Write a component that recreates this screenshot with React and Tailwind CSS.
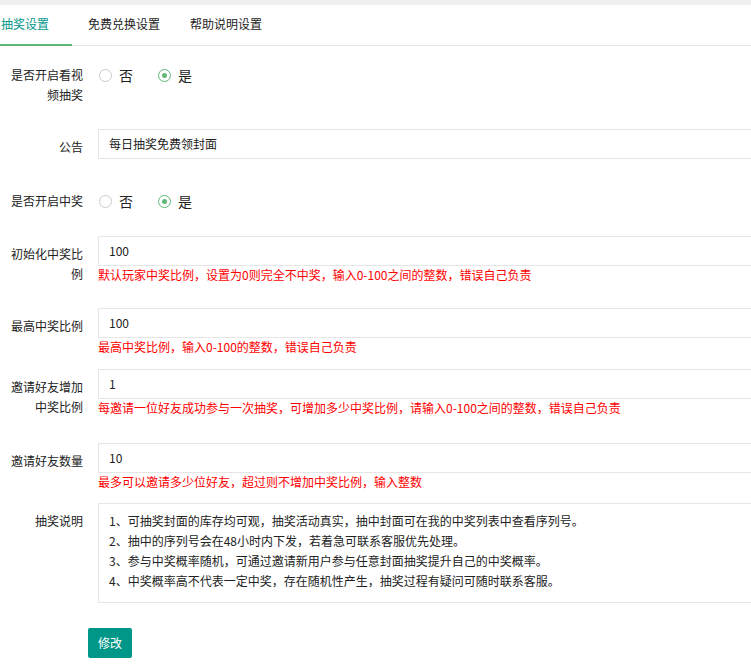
import React from "react"

const font = { fontFamily: '"Noto Sans CJK SC", "Noto Sans", sans-serif' }

function Radio({ checked, label }) {
    return (
        <div className="flex items-center">
            {checked ? (
                <span className="w-[13px] h-[13px] rounded-full border border-[#5FB878] flex items-center justify-center">
                    <span className="w-[5px] h-[5px] rounded-full bg-[#5FB878]"></span>
                </span>
            ) : (
                <span className="w-[13px] h-[13px] rounded-full border border-[#c9c9c9]"></span>
            )}
            <span className="ml-[7px] text-[14px] text-[#222]">{label}</span>
        </div>
    )
}

function Label({ children }) {
    return (
        <div className="w-[83px] shrink-0 pl-[10px] pt-[8px] pb-[8px] text-right leading-[20px] text-[#222]">
            {children}
        </div>
    )
}

function Row({ label, mb, children }) {
    return (
        <div className={"flex " + mb}>
            <Label>{label}</Label>
            <div className="ml-[15px] flex-1">{children}</div>
        </div>
    )
}

function Input({ value }) {
    return (
        <div className="h-[30px] border border-[#e6e6e6] bg-white pl-[10px] flex items-center text-[#222]">
            {value}
        </div>
    )
}

function Tip({ children }) {
    return <div className="leading-[17px] text-[#ff0000] whitespace-nowrap">{children}</div>
}

function RadioPair() {
    return (
        <div className="mt-[8px] h-[20px] flex items-center pl-[1px]">
            <Radio label="否" />
            <div className="ml-[25px]">
                <Radio checked label="是" />
            </div>
        </div>
    )
}

export default function App() {
    return (
        <div className="w-[751px] h-[666px] overflow-hidden bg-white text-[12px]" style={font}>
            <div className="h-[5px] bg-[#f0f0f0]"></div>
            <div className="flex h-[41px] border-b border-[#e6e6e6] leading-[38px]">
                <div className="relative w-[72px] pl-[1px] text-[#009688]">
                    抽奖设置
                    <span className="absolute left-0 right-0 bottom-[-1px] h-[2px] bg-[#5FB878]"></span>
                </div>
                <div className="ml-[16px] text-[#222]">免费兑换设置</div>
                <div className="ml-[30px] text-[#222]">帮助说明设置</div>
            </div>

            <div className="w-[780px] mt-[11px]">
                <Row label="是否开启看视频抽奖" mb="mb-[16px]">
                    <RadioPair />
                </Row>
                <Row label="公告" mb="mb-[18px]">
                    <Input value="每日抽奖免费领封面" />
                </Row>
                <Row label="是否开启中奖" mb="mb-[17px]">
                    <RadioPair />
                </Row>
                <Row label="初始化中奖比例" mb="mb-[16px]">
                    <Input value="100" />
                    <Tip>默认玩家中奖比例，设置为0则完全不中奖，输入0-100之间的整数，错误自己负责</Tip>
                </Row>
                <Row label="最高中奖比例" mb="mb-[14px]">
                    <Input value="100" />
                    <Tip>最高中奖比例，输入0-100的整数，错误自己负责</Tip>
                </Row>
                <Row label="邀请好友增加中奖比例" mb="mb-[18px]">
                    <Input value="1" />
                    <Tip>每邀请一位好友成功参与一次抽奖，可增加多少中奖比例，请输入0-100之间的整数，错误自己负责</Tip>
                </Row>
                <Row label="邀请好友数量" mb="mb-[13px]">
                    <Input value="10" />
                    <Tip>最多可以邀请多少位好友，超过则不增加中奖比例，输入整数</Tip>
                </Row>
                <Row label="抽奖说明" mb="mb-[25px]">
                    <div className="h-[100px] border border-[#e6e6e6] pl-[10px] pt-[7px] leading-[20px] text-[#222]">
                        <div>1、可抽奖封面的库存均可观，抽奖活动真实，抽中封面可在我的中奖列表中查看序列号。</div>
                        <div>2、抽中的序列号会在48小时内下发，若着急可联系客服优先处理。</div>
                        <div>3、参与中奖概率随机，可通过邀请新用户参与任意封面抽奖提升自己的中奖概率。</div>
                        <div>4、中奖概率高不代表一定中奖，存在随机性产生，抽奖过程有疑问可随时联系客服。</div>
                    </div>
                </Row>
                <div className="pl-[88px]">
                    <button className="h-[30px] px-[10px] bg-[#009688] text-white rounded-[2px] text-[12px]">修改</button>
                </div>
            </div>
        </div>
    )
}
